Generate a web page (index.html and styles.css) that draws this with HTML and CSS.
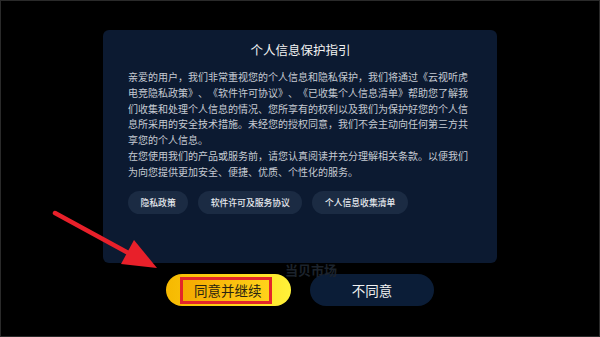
FILE: index.html
```html
<!DOCTYPE html>
<html lang="zh-CN">

<head>
  <meta charset="UTF-8">
  <meta name="viewport" content="width=device-width, initial-scale=1.0">
  <title>个人信息保护指引</title>
  <link rel="stylesheet" href="styles.css">
</head>

<body>
  <div class="screen">
    <!-- 隐私弹窗 -->
    <div class="dialog">
      <h1 class="dialog-title">个人信息保护指引</h1>
      <div class="dialog-body">
        <p>亲爱的用户，我们非常重视您的个人信息和隐私保护，我们将通过《云视听虎电竞隐私政策》、《软件许可协议》、《已收集个人信息清单》帮助您了解我们收集和处理个人信息的情况、您所享有的权利以及我们为保护好您的个人信息所采用的安全技术措施。未经您的授权同意，我们不会主动向任何第三方共享您的个人信息。</p>
        <p>在您使用我们的产品或服务前，请您认真阅读并充分理解相关条款。以便我们为向您提供更加安全、便捷、优质、个性化的服务。</p>
      </div>
      <div class="links">
        <a class="link-pill" href="#">隐私政策</a>
        <a class="link-pill" href="#">软件许可及服务协议</a>
        <a class="link-pill" href="#">个人信息收集清单</a>
      </div>
    </div>

    <!-- 底部按钮 -->
    <div class="actions">
      <button class="btn btn-agree"><span class="mark">同意并继续</span></button>
      <button class="btn btn-refuse">不同意</button>
    </div>

    <!-- 水印 -->
    <div class="watermark">当贝市场</div>

    <!-- 标注箭头 -->
    <svg class="arrow" width="600" height="337" viewBox="0 0 600 337">
      <line x1="55" y1="213" x2="132" y2="255" stroke="#e8202a" stroke-width="4.5" stroke-linecap="round" />
      <polygon points="157,268 121,264 134,240" fill="#e8202a" />
    </svg>
  </div>
</body>

</html>
```

FILE: styles.css
```css
/* 全局样式重置 */
* {
  box-sizing: border-box;
  margin: 0;
  padding: 0;
}

body {
  background: #000;
  font-family: "Noto Sans CJK SC", "Noto Sans", sans-serif;
}

/* 画面 */
.screen {
  position: relative;
  width: 600px;
  height: 337px;
  border: 1px solid #2a2a2a;
  display: flex;
  flex-direction: column;
  align-items: center;
  padding-top: 29px;
  overflow: hidden;
}

/* 弹窗 */
.dialog {
  position: relative;
  z-index: 1;
  width: 394px;
  height: 233px;
  background: #0c1a31;
  border-radius: 6px;
  padding: 11px 24px 0 25px;
}

.dialog-title {
  font-size: 12.5px;
  font-weight: normal;
  line-height: 18px;
  color: #f2f2f2;
  text-align: center;
}

.dialog-body {
  margin-top: 10px;
  font-size: 10px;
  line-height: 15.8px;
  color: #c6cbd3;
  text-spacing-trim: space-all;
  font-feature-settings: "halt" 0;
}

.links {
  display: flex;
  gap: 10px;
  margin-top: 11px;
}

.link-pill {
  height: 23px;
  line-height: 23px;
  padding: 0 12.5px;
  border-radius: 12px;
  background: #1b2b43;
  color: #e6e9ee;
  font-size: 8.8px;
  font-weight: 500;
  text-decoration: none;
}

/* 底部按钮 */
.actions {
  display: flex;
  gap: 19px;
  margin-top: 11px;
}

.btn {
  height: 32px;
  border: none;
  border-radius: 16px;
  font-family: inherit;
  font-size: 13.5px;
}

.btn-agree {
  width: 125px;
  background: linear-gradient(90deg, #f6b800, #ffd81c 60%, #fff23a);
  display: flex;
  align-items: center;
  padding-left: 14px;
}

.btn-agree .mark {
  width: 92px;
  height: 27px;
  border: 3px solid #e3262a;
  background: linear-gradient(90deg, #f5a900, #ffd21a);
  color: #2a2410;
  line-height: 21px;
  padding-left: 11px;
  text-align: left;
}

.btn-refuse {
  width: 124px;
  background: #0b1d37;
  color: #f0f0f0;
}

/* 水印 */
.watermark {
  position: absolute;
  left: 284px;
  top: 259px;
  font-size: 13px;
  color: #1c232c;
  font-weight: bold;
}

/* 标注箭头 */
.arrow {
  position: absolute;
  z-index: 2;
  left: -1px;
  top: -1px;
}
```
